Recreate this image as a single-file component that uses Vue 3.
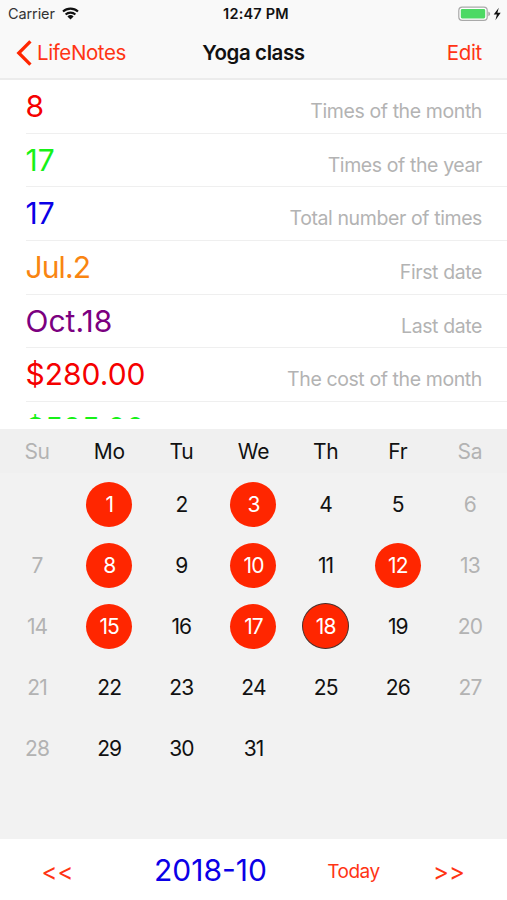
<template>
    <div class="screen">
        <header class="header">
            <div class="status">
                <div class="status__left">
                    <span class="status__carrier">Carrier</span>
                    <svg class="status__wifi" width="17" height="13" viewBox="0 0 17 13" aria-hidden="true">
                        <path d="M1 4.6a11 11 0 0 1 15 0M3.6 7.5a7.2 7.2 0 0 1 9.8 0" fill="none" stroke="#111"
                            stroke-width="2.1" />
                        <path d="M5.4 9.4a4.6 4.6 0 0 1 6.2 0L8.5 12.6z" fill="#111" />
                    </svg>
                </div>
                <span class="status__time">12:47 PM</span>
                <svg class="status__battery" width="44" height="16" viewBox="0 0 44 16" aria-hidden="true">
                    <rect x="0.8" y="1.2" width="28.4" height="13.2" rx="3.4" fill="#fff" stroke="#a9a9a9"
                        stroke-width="1.2" />
                    <rect x="2.8" y="3.1" width="24.4" height="9.4" rx="1.4" fill="#4cd964" />
                    <path d="M30.3 5.6q1.9 .8 1.9 2.3t-1.9 2.3z" fill="#a9a9a9" />
                    <path d="M40.8 1.8L35.7 8.6h3.2l-1.5 5.6 5.3-7.4h-3.3z" fill="#111" />
                </svg>
            </div>
            <nav class="nav">
                <button type="button" class="nav__back">
                    <svg width="16" height="26" viewBox="0 0 16 26" aria-hidden="true">
                        <path d="M14.4 1.4L2.8 13l11.6 11.6" fill="none" stroke="#ff2600" stroke-width="3.3" />
                    </svg>
                    <span class="nav__back-text">LifeNotes</span>
                </button>
                <h1 class="nav__title">Yoga class</h1>
                <button type="button" class="nav__edit">Edit</button>
            </nav>
        </header>

        <section class="stats">
            <div v-for="item in stats" :key="item.label" class="stats__row">
                <span class="stats__value" :class="`stats__value--${item.color}`">{{ item.value }}</span>
                <span class="stats__label">{{ item.label }}</span>
            </div>
        </section>

        <section class="calendar">
            <div class="calendar__week">
                <span v-for="(name, index) in weekdays" :key="name" :class="{ weekend: isWeekend(index) }">{{ name
                    }}</span>
            </div>
            <div class="calendar__days">
                <div v-for="(day, index) in cells" :key="index" class="calendar__cell">
                    <span v-if="day" class="day"
                        :class="{ weekend: isWeekend(index % 7), 'day--marked': marked.includes(day), 'day--today': day === today }">{{
                            day }}</span>
                </div>
            </div>
        </section>

        <footer class="footer">
            <button type="button" class="footer__arrow">&lt;&lt;</button>
            <span class="footer__month">2018-10</span>
            <button type="button" class="footer__today">Today</button>
            <button type="button" class="footer__arrow">&gt;&gt;</button>
        </footer>
    </div>
</template>

<script setup>
const stats = [
    { value: '8', label: 'Times of the month', color: 'red' },
    { value: '17', label: 'Times of the year', color: 'green' },
    { value: '17', label: 'Total number of times', color: 'blue' },
    { value: 'Jul.2', label: 'First date', color: 'orange' },
    { value: 'Oct.18', label: 'Last date', color: 'purple' },
    { value: '$280.00', label: 'The cost of the month', color: 'red' },
    { value: '$595.00', label: '', color: 'green' }
]

const weekdays = ['Su', 'Mo', 'Tu', 'We', 'Th', 'Fr', 'Sa']
const marked = [1, 3, 8, 10, 12, 15, 17, 18]
const today = 18

// October 2018 starts on a Monday
const cells = [null, ...Array.from({ length: 31 }, (_, i) => i + 1)]

const isWeekend = (index) => index === 0 || index === 6
</script>

<style>
body {
    margin: 0;
}
</style>

<style scoped>
.screen {
    display: flex;
    flex-direction: column;
    width: 507px;
    height: 900px;
    overflow: hidden;
    background: #fff;
    color: #111;
    font-family: Inter, "Liberation Sans", sans-serif;
}

button {
    padding: 0;
    border: 0;
    background: none;
    font: inherit;
    color: #ff3414;
    cursor: pointer;
}

.header {
    box-sizing: border-box;
    flex: 0 0 80px;
    border-bottom: 2px solid #ececec;
    background: #f9f9f9;
}

.status {
    display: grid;
    grid-template-columns: 1fr auto 1fr;
    align-items: center;
    height: 27px;
    padding: 0 5px 0 8px;
    font-size: 14.5px;
}

.status__left {
    display: flex;
    align-items: center;
    gap: 7px;
}

.status__carrier {
    letter-spacing: -0.1px;
    color: #333;
}

.status__time {
    padding-left: 2px;
    font-weight: 600;
    letter-spacing: 0.2px;
}

.status__battery {
    justify-self: end;
}

.nav {
    display: grid;
    grid-template-columns: 1fr auto 1fr;
    align-items: center;
    height: 51px;
    padding: 0 16px;
    font-size: 20.5px;
}

.nav__back {
    display: flex;
    align-items: center;
    gap: 5px;
    letter-spacing: -0.4px;
}

.nav__title {
    margin: 0;
    font-size: 20.5px;
    font-weight: 600;
    letter-spacing: -0.4px;
}

.nav__edit {
    justify-self: end;
    margin-right: 9px;
    letter-spacing: -0.3px;
}

.stats {
    flex: 0 0 339px;
    margin-bottom: 10px;
    overflow: hidden;
}

.stats__row {
    box-sizing: border-box;
    display: flex;
    justify-content: space-between;
    height: 53.7px;
    margin-left: 26px;
    padding-right: 25px;
    border-bottom: 1.5px solid #efefef;
    white-space: nowrap;
}

.stats__value {
    margin-left: -0.5px;
    font-size: 30px;
    line-height: 52.6px;
}

.stats__value--red {
    color: #f50000;
}

.stats__value--green {
    color: #17f117;
}

.stats__value--blue {
    color: #0b00e6;
}

.stats__value--orange {
    letter-spacing: -0.9px;
    color: #f98511;
}

.stats__value--purple {
    color: #7b0080;
}

.stats__label {
    font-size: 19.5px;
    line-height: 63px;
    letter-spacing: -0.4px;
    color: #b3b3b3;
}

.calendar {
    flex: 0 0 410px;
    background: #f2f2f2;
}

.calendar__week,
.calendar__days {
    display: grid;
    grid-template-columns: repeat(7, 1fr);
    padding: 0 1px;
    text-align: center;
}

.calendar__week {
    height: 44px;
    background: #f0f0f0;
    font-size: 21px;
    line-height: 45px;
    letter-spacing: -0.3px;
}

.calendar__days {
    grid-auto-rows: 61px;
    padding-top: 0.6px;
    font-size: 21px;
}

.calendar__cell {
    display: flex;
    align-items: center;
    justify-content: center;
}

.day {
    box-sizing: border-box;
    width: 46px;
    height: 45px;
    border-radius: 50%;
    line-height: 45px;
    letter-spacing: -0.9px;
}

.weekend {
    color: #b3b3b3;
}

.day--marked {
    background: #ff2600;
    color: #fff;
}

.day--today {
    width: 47px;
    height: 46px;
    border: 1px solid #49302b;
}

.footer {
    display: grid;
    grid-template-columns: 115px 191px 95px 96px;
    align-items: start;
    justify-items: center;
    height: 61px;
    line-height: 63px;
}

.footer__arrow {
    font-size: 24px;
    line-height: 65px;
}

.footer__month {
    font-size: 30px;
    color: #0b00e6;
}

.footer__today {
    font-size: 19px;
    line-height: 66px;
    letter-spacing: -0.5px;
}
</style>
